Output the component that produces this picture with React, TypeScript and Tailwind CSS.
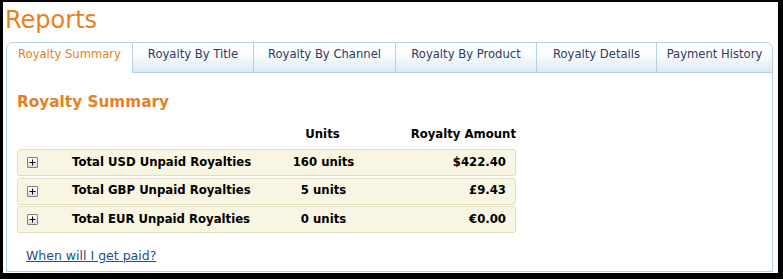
import React from "react";

const tabs = [
  { label: "Royalty Summary", w: 127 },
  { label: "Royalty By Title", w: 121 },
  { label: "Royalty By Channel", w: 142 },
  { label: "Royalty By Product", w: 141 },
  { label: "Royalty Details", w: 120 },
  { label: "Payment History", w: 116 },
];

const rows = [
  { label: "Total USD Unpaid Royalties", units: "160 units", amount: "$422.40" },
  { label: "Total GBP Unpaid Royalties", units: "5 units", amount: "£9.43" },
  { label: "Total EUR Unpaid Royalties", units: "0 units", amount: "€0.00" },
];

function PlusBox() {
  return (
    <div className="w-[11px] h-[11px] border border-[#7f7f7f] rounded-[1px] bg-gradient-to-b from-white to-[#dcdcdc] flex items-center justify-center">
      <svg width="7" height="7" viewBox="0 0 7 7">
        <rect x="3" y="0.5" width="1" height="6" fill="#000" />
        <rect x="0.5" y="3" width="6" height="1" fill="#000" />
      </svg>
    </div>
  );
}

export default function App() {
  return (
    <div className="w-[783px] h-[279px] bg-black pt-[2px] pl-[3px] pr-[5px] pb-[6px]" style={{ fontFamily: '"DejaVu Sans", Verdana, sans-serif' }}>
      <div className="w-full h-full bg-white pl-[3px] pr-[4px]">
        <div className="h-[40px] text-[24px] leading-[36px] text-[#e8801f] -ml-[1px]">Reports</div>
        <div className="w-[767px] h-[230px] border border-[#b1d2e2] rounded-t-[7px] flex flex-col">
          <div className="flex h-[30px]">
            {tabs.map((t, i) => (
              <div
                key={t.label}
                style={{ width: t.w - (i === 0 ? 1 : 0) - (i === tabs.length - 1 ? 1 : 0) }}
                className={
                  "flex items-center justify-center text-[11.6px] " +
                  (i === 0
                    ? "bg-white text-[#e8801f] border-r border-[#b1d2e2] rounded-tl-[7px]"
                    : "bg-gradient-to-b from-white from-30% to-[#dce9f0] text-[#2b3a67] border-b border-[#b1d2e2] " +
                      (i === tabs.length - 1 ? "rounded-tr-[7px]" : "border-r"))
                }
              >
                <span className="-mt-[6px]">{t.label}</span>
              </div>
            ))}
          </div>
          <div className="pl-[10px] pt-[17px]">
            <div className="text-[15.3px] font-bold text-[#e8801f] leading-[24px]">Royalty Summary</div>
            <div className="w-[499px] mt-[8px]">
              <div className="flex h-[26px] items-center text-[11.7px] font-bold text-black">
                <div className="w-[254px]" />
                <div className="w-[103px] text-center">Units</div>
                <div className="flex-1 text-right">Royalty Amount</div>
              </div>
              <div className="flex flex-col gap-[1.5px] mt-[1px]">
                {rows.map((r) => (
                  <div key={r.label} className="flex h-[27px] items-center bg-[#f8f5e2] border border-[#e3ddc2] rounded-[3px] text-[11.7px] font-bold text-black">
                    <div className="w-[54px] pl-[9px]">
                      <PlusBox />
                    </div>
                    <div className="w-[200px]">{r.label}</div>
                    <div className="w-[103px] text-center">{r.units}</div>
                    <div className="flex-1 text-right pr-[9px]">{r.amount}</div>
                  </div>
                ))}
              </div>
            </div>
            <div className="mt-[10px] pl-[9px]">
              <a href="#" className="text-[12.5px] text-[#1c4f8e] underline">When will I get paid?</a>
            </div>
          </div>
        </div>
      </div>
    </div>
  );
}
